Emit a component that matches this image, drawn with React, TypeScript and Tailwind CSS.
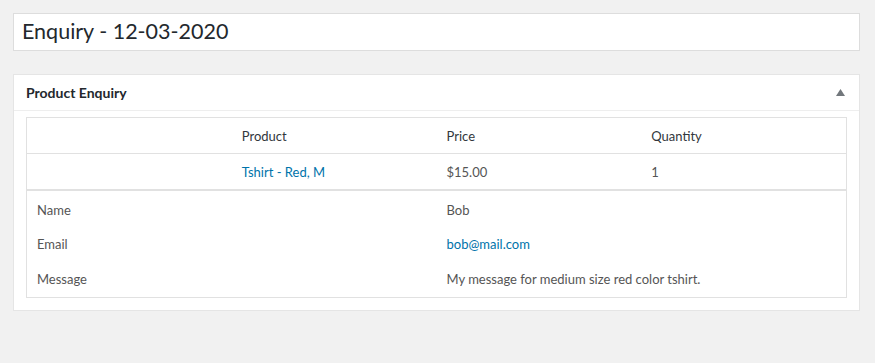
export default function App() {
  const cell = "px-[10px] flex items-center";
  const head = "px-[10px] pt-[2px] flex items-center";
  return (
    <div className="min-h-screen w-full bg-[#f1f1f1] p-[13px] pr-[15px] font-['Lato',sans-serif] text-[13px] text-[#555]">
      {/* title input */}
      <div className="flex h-[38px] items-center border border-[#ddd] bg-white px-[8px] pb-[1px] text-[21.5px] text-[#23282d]">
        Enquiry - 12-03-2020
      </div>

      {/* postbox */}
      <div className="mt-[23px] border border-[#e5e5e5] bg-white">
        <div className="flex h-[36px] items-center justify-between border-b border-[#eee] pl-[12px] pr-[14px]">
          <span className="text-[14px] font-bold text-[#23282d]">Product Enquiry</span>
          <svg width="9" height="7" viewBox="0 0 9 7">
            <path d="M0 7 L4.5 0 L9 7 Z" fill="#72777c" />
          </svg>
        </div>

        <div className="px-[12px] pt-[6px] pb-[12px]">
          <div className="border border-[#e1e1e1]">
            <div className="grid h-[36px] grid-cols-4 border-b border-[#e1e1e1] text-[#32373c]">
              <div className={head} />
              <div className={head}>Product</div>
              <div className={head}>Price</div>
              <div className={head}>Quantity</div>
            </div>
            <div className="grid h-[37px] grid-cols-4 border-b-2 border-[#e1e1e1]">
              <div className={head} />
              <div className={head + " text-[#0073aa]"}>Tshirt - Red, M</div>
              <div className={head}>$15.00</div>
              <div className={head}>1</div>
            </div>
            <div className="pt-[2px]">
              {[
                ["Name", "Bob", false],
                ["Email", "bob@mail.com", true],
                ["Message", "My message for medium size red color tshirt.", false],
              ].map(([k, v, link]) => (
                <div key={k as string} className="grid h-[34.5px] grid-cols-4">
                  <div className={cell + " col-span-2"}>{k}</div>
                  <div className={cell + " col-span-2" + (link ? " text-[#0073aa]" : "")}>{v}</div>
                </div>
              ))}
            </div>
          </div>
        </div>
      </div>
    </div>
  );
}
